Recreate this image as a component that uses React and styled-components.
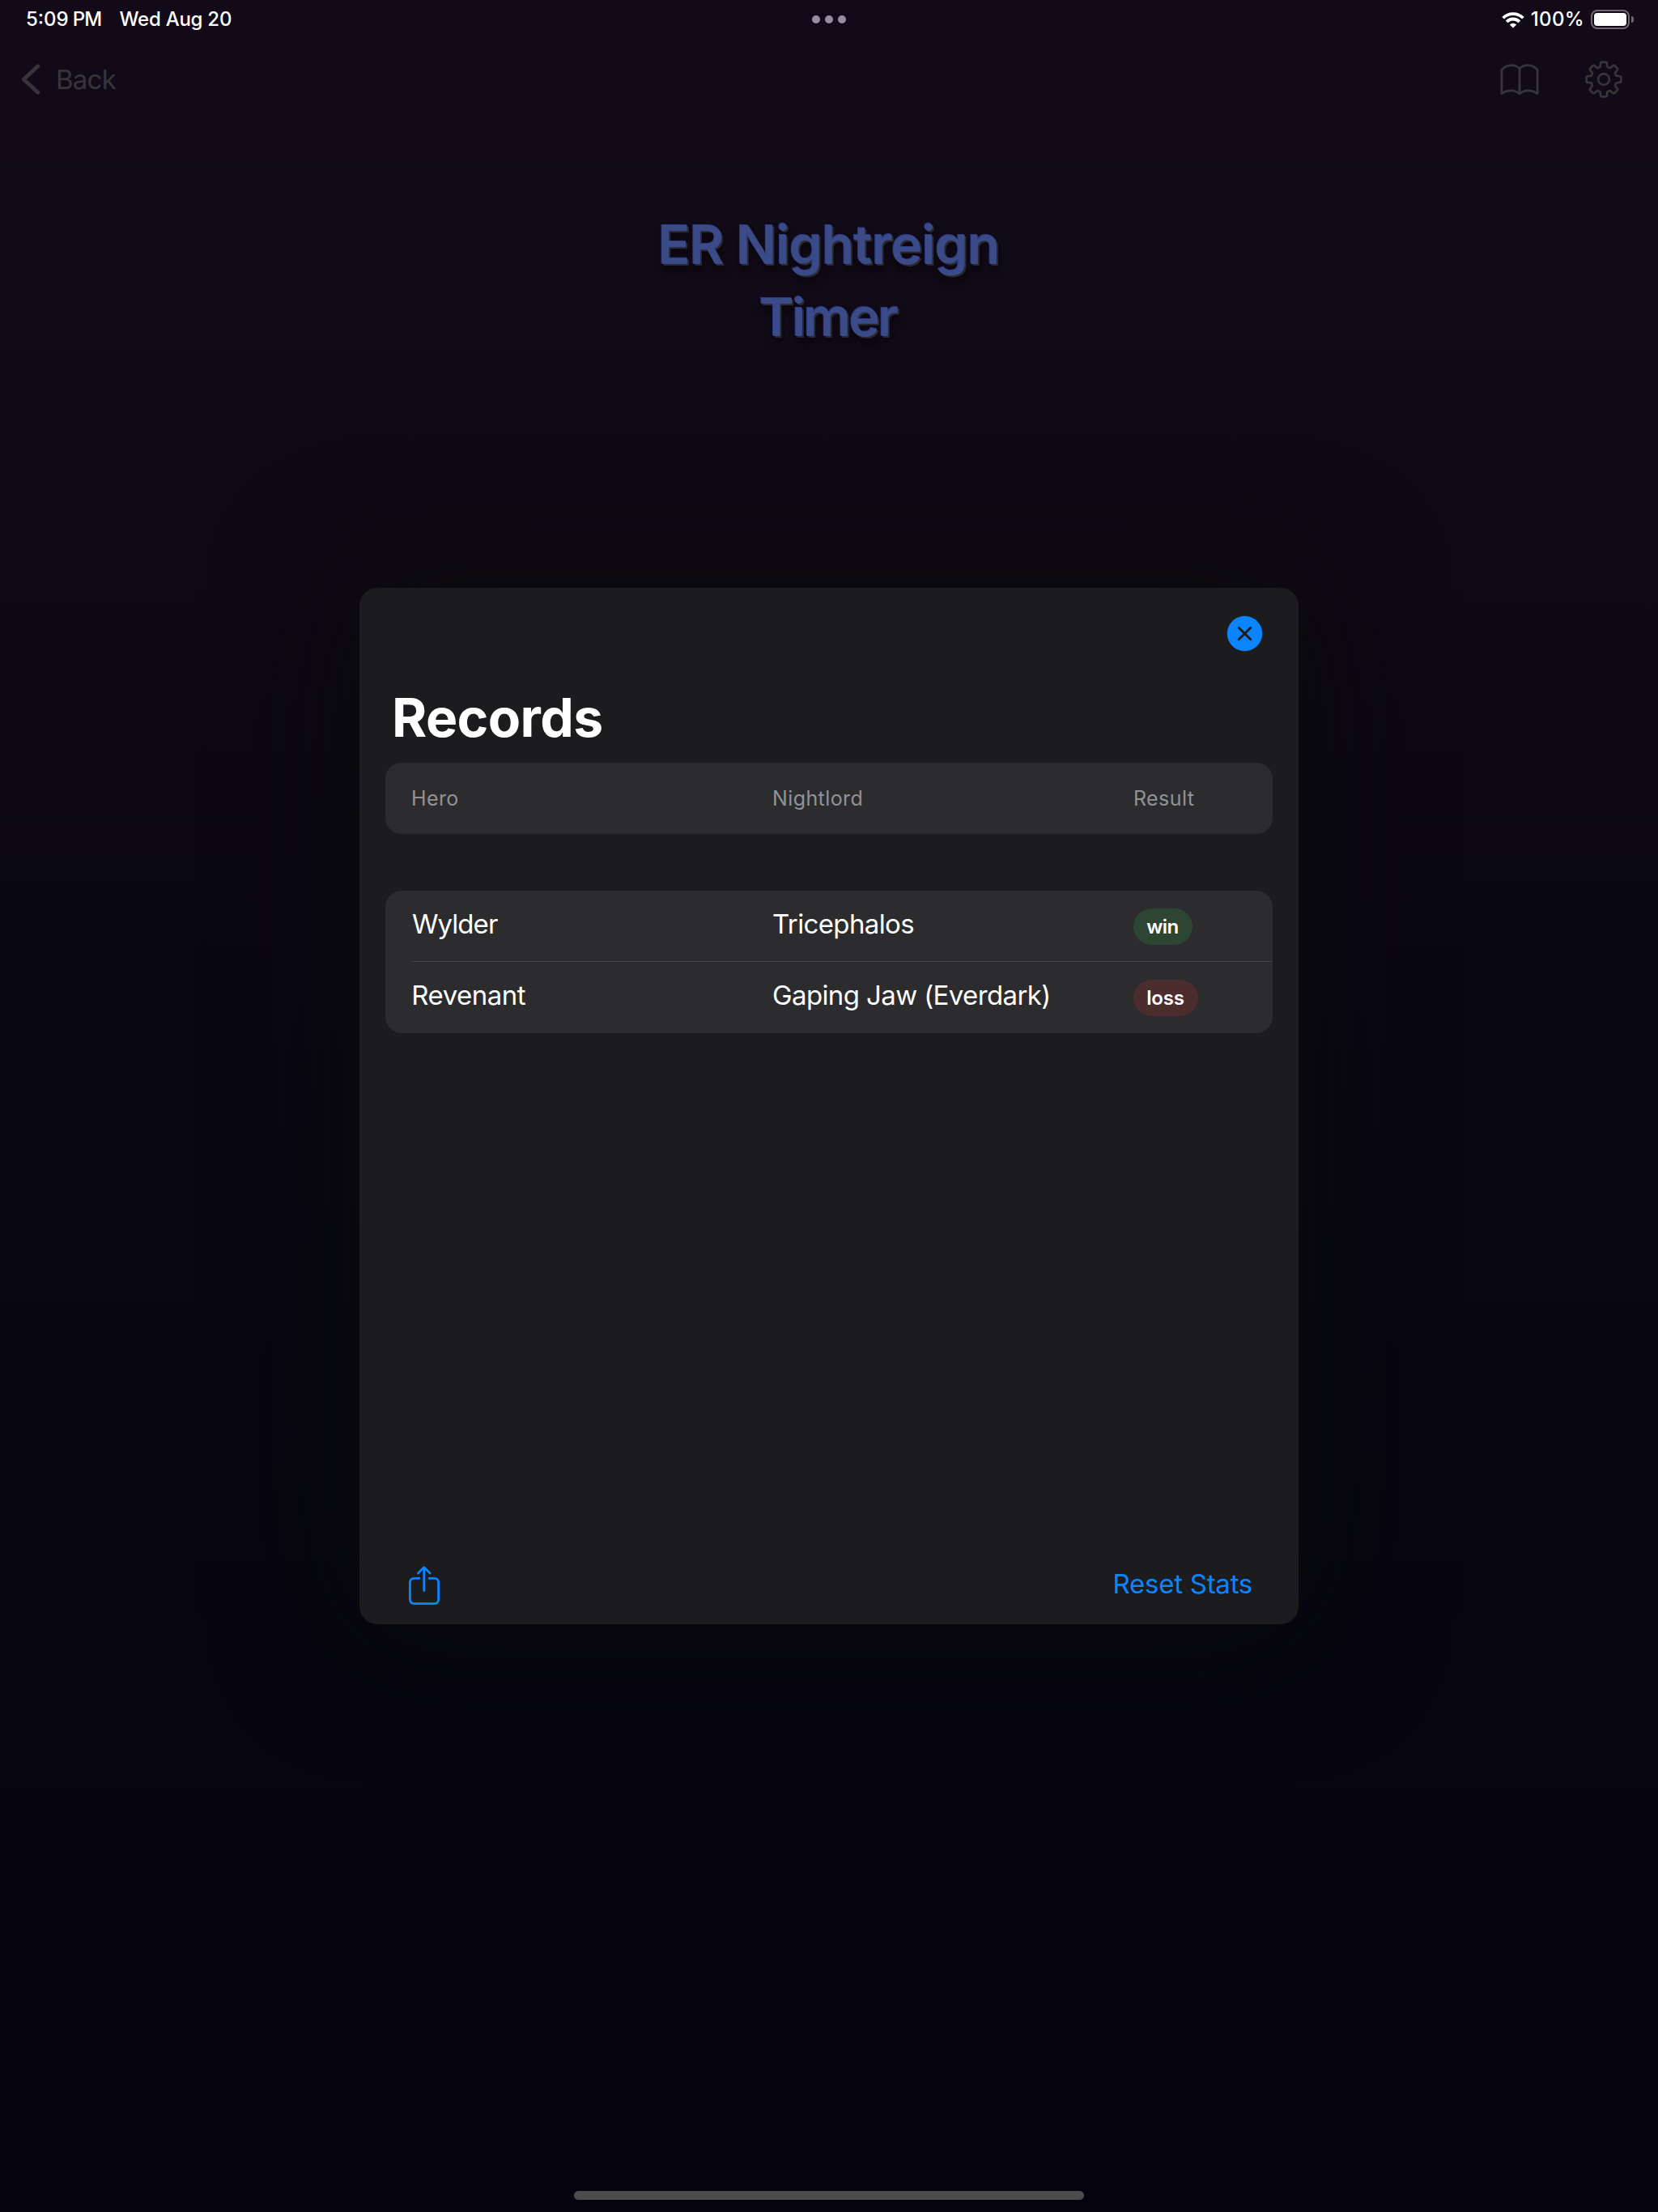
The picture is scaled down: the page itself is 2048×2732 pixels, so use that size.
import React from "react";
import styled, { createGlobalStyle } from "styled-components";

const GlobalStyle = createGlobalStyle`
  *, *::before, *::after { box-sizing: border-box; }
  html, body { margin: 0; padding: 0; background: #04030f; }
  body { font-family: Inter, "Liberation Sans", sans-serif; }
  button {
    display: flex;
    align-items: center;
    margin: 0;
    padding: 0;
    border: 0;
    background: none;
    color: inherit;
    font: inherit;
  }
  svg { display: block; flex: none; }
`;

const Screen = styled.div`
  position: relative;
  display: flex;
  flex-direction: column;
  width: 2048px;
  height: 2732px;
  overflow: hidden;
  background: linear-gradient(
    180deg,
    #130a19 0%,
    #110a17 12%,
    #0f0915 25%,
    #0c0815 36%,
    #090713 50%,
    #070611 70%,
    #04030f 100%
  );
`;

const StatusBar = styled.header`
  display: grid;
  grid-template-columns: 1fr auto 1fr;
  align-items: center;
  height: 48px;
  padding: 0 30px 0 32px;
  color: #fff;
  font-size: 24px;
  font-weight: 500;
  line-height: 47px;
`;

const StatusGroup = styled.div`
  display: flex;
  align-items: center;
  justify-content: ${(p) => (p.$end ? "flex-end" : "flex-start")};
`;

const StatusText = styled.span`
  padding-bottom: 1px;
  line-height: 46px;
  letter-spacing: ${(p) => p.$track || 0}px;
  margin-left: ${(p) => p.$before || 0}px;
  white-space: nowrap;
`;

const Dots = styled.div`
  display: flex;
  gap: 6px;
  margin-right: 2px;
`;

const Dot = styled.i`
  width: 10px;
  height: 10px;
  border-radius: 50%;
  background: #978d9f;
`;

const Battery = styled.div`
  display: flex;
  align-items: center;
  gap: 2px;
  margin-left: 8px;
`;

const BatteryShell = styled.div`
  width: 48px;
  height: 24px;
  padding: 2px;
  border: 2px solid #6e6876;
  border-radius: 8px;
`;

const BatteryLevel = styled.div`
  height: 100%;
  border-radius: 4px;
  background: #fff;
`;

const BatteryCap = styled.div`
  width: 3px;
  height: 8px;
  border-radius: 0 4px 4px 0;
  background: #6e6876;
`;

const NavBar = styled.nav`
  display: flex;
  align-items: center;
  justify-content: space-between;
  height: 100px;
  padding: 0 44px 0 26px;
  color: #37353a;
`;

const BackButton = styled.button`
  && { gap: 19px; }
`;

const BackLabel = styled.span`
  font-size: 33px;
  line-height: 40px;
  letter-spacing: -0.75px;
`;

const NavActions = styled.div`
  display: flex;
  align-items: center;
  gap: 57px;
`;

const AppTitle = styled.h1`
  display: flex;
  flex-direction: column;
  align-items: center;
  margin: 109px 0 0;
  color: #3b4b88;
  font-size: 66px;
  font-weight: 570;
  line-height: 90px;
  text-shadow:
    -1px -1px 0 #27388a,
    2px 2px 0 #2a2930,
    2px 8px 8px rgba(0, 0, 0, 0.5);
`;

const TitleLine = styled.span`
  font-size: ${(p) => p.$size}px;
  letter-spacing: ${(p) => p.$track}px;
  margin-right: ${(p) => -p.$track}px;
`;

const Overlay = styled.div`
  position: absolute;
  inset: 0;
  display: flex;
  align-items: center;
  justify-content: center;
`;

const Sheet = styled.section`
  display: flex;
  flex-direction: column;
  width: 1160px;
  height: 1280px;
  padding: 0 32px;
  border-radius: 22px;
  background: #1c1c1e;
  color: #fff;
  box-shadow: 0 0 170px rgba(9, 12, 8, 0.85);
`;

const SheetTop = styled.div`
  display: flex;
  align-items: flex-start;
  justify-content: flex-end;
  padding: 34px 12px 0 0;
  height: 116px;
`;

const SheetTitle = styled.h2`
  margin: 0;
  height: 100px;
  padding-left: 8px;
  font-size: 66px;
  font-weight: 700;
  line-height: 89px;
  letter-spacing: -0.65px;
`;

const Card = styled.div`
  border-radius: 20px;
  background: #2c2c2e;
  overflow: hidden;
  margin-bottom: ${(p) => p.$after || 0}px;
`;

const Columns = styled.div`
  display: grid;
  grid-template-columns: 446px 446px 1fr;
  height: 88px;
  margin-left: 32px;
`;

const HeaderRow = styled(Columns)`
  align-items: center;
  color: #929296;
  font-size: 25px;
  line-height: 30px;
  letter-spacing: 0.4px;
`;

const RecordRow = styled(Columns)`
  align-items: baseline;
  padding-top: 21px;
  font-size: 33px;
  line-height: 40px;
  letter-spacing: -0.62px;
  box-shadow: ${(p) => (p.$divided ? "inset 0 -1px 0 #464649" : "none")};
`;

const HeroName = styled.span`
  padding-left: ${(p) => p.$inset}px;
  letter-spacing: ${(p) => p.$track}px;
`;

const Badge = styled.span`
  justify-self: start;
  height: 45px;
  padding: 0 ${(p) => (p.$kind === "win" ? "17.2px 0 16.2px" : "16.8px 0 16.2px")};
  padding: ${(p) => (p.$kind === "win" ? "0 17.4px 0 16.2px" : "0 17.2px 0 16.2px")};
  border-radius: 22.5px;
  background: ${(p) => (p.$kind === "win" ? "#2d4533" : "#4c2d2e")};
  font-size: 24px;
  font-weight: 600;
  line-height: 45px;
  letter-spacing: ${(p) => (p.$kind === "win" ? "-0.5px" : "-0.2px")};
`;

const Toolbar = styled.footer`
  display: flex;
  align-items: center;
  justify-content: space-between;
  height: 100px;
  margin-top: auto;
  padding: 0 25px 0 29px;
  color: #0a84ff;
`;

const ShareButton = styled.button`
  && { padding-top: 4px; }
`;

const ResetLabel = styled.span`
  font-size: 33px;
  line-height: 40px;
  letter-spacing: -0.26px;
`;

const HomeIndicator = styled.div`
  align-self: center;
  width: 630px;
  height: 11px;
  margin: auto 0 15px;
  border-radius: 5.5px;
  background: #4c4c4c;
`;

const WifiIcon = () => (
  <svg width="28" height="21" viewBox="0 0 28 21" fill="none" stroke="#fff" strokeWidth="3.8">
    <path d="M1.6 8.3A17.3 17.3 0 0 1 26.4 8.3" />
    <path d="M6.1 12.8A11.1 11.1 0 0 1 21.9 12.8" />
    <path d="M9.8 16.4A6 6 0 0 1 18.2 16.4L14 20.6Z" fill="#fff" stroke="none" />
  </svg>
);

const ChevronIcon = () => (
  <svg width="24" height="38" viewBox="0 0 24 38" fill="none" stroke="currentColor" strokeWidth="4.8" strokeLinecap="round" strokeLinejoin="round">
    <path d="M20.8 2.8L3.3 19L20.8 35.2" />
  </svg>
);

const BookIcon = () => (
  <svg width="48" height="40" viewBox="0 0 48 40" fill="none" stroke="currentColor" strokeWidth="2.8" strokeLinejoin="round">
    <path d="M1.9 37.6V8.4C8 1.2 18.8 .8 24 6.8C29.2 .8 40 1.2 46.1 8.4V37.6C38.6 32.6 29.8 32.8 24 38C18.2 32.8 9.4 32.6 1.9 37.6Z" />
    <path d="M24 6.8V38" />
  </svg>
);

const gearPoint = (radius, degrees) => {
  const a = ((degrees - 90) * Math.PI) / 180;
  return `${(23 + radius * Math.cos(a)).toFixed(2)} ${(23 + radius * Math.sin(a)).toFixed(2)}`;
};

const gearPath =
  Array.from({ length: 8 }, (_, i) => {
    const c = i * 45;
    return (
      `${i ? "L" : "M"}${gearPoint(16.2, c - 15.5)}` +
      `L${gearPoint(20, c - 11)}Q${gearPoint(21.7, c - 10)} ${gearPoint(21.5, c - 6)}` +
      `L${gearPoint(21.5, c + 6)}Q${gearPoint(21.7, c + 10)} ${gearPoint(20, c + 11)}` +
      `L${gearPoint(16.2, c + 15.5)}Q${gearPoint(15.2, c + 22.5)} ${gearPoint(16.2, c + 29.5)}`
    );
  }).join("") + "Z";

const GearIcon = () => (
  <svg width="46" height="46" viewBox="0 0 46 46" fill="none" stroke="currentColor" strokeWidth="2.7" strokeLinejoin="round">
    <path d={gearPath} />
    <circle cx="23" cy="23" r="6.9" />
  </svg>
);

const CloseIcon = () => (
  <svg width="45" height="45" viewBox="0 0 45 45">
    <circle cx="22.5" cy="22.5" r="21.7" fill="#0a84ff" />
    <path d="M15.2 15.2L29.8 29.8M29.8 15.2L15.2 29.8" stroke="#1c1c1e" strokeWidth="2.9" strokeLinecap="round" />
  </svg>
);

const ShareIcon = () => (
  <svg width="38" height="48" viewBox="0 0 38 48" fill="none" stroke="currentColor" strokeWidth="2.8" strokeLinecap="round" strokeLinejoin="round">
    <path d="M14 15.4H6.4A5 5 0 0 0 1.4 20.4V41.6A5 5 0 0 0 6.4 46.6H31.6A5 5 0 0 0 36.6 41.6V20.4A5 5 0 0 0 31.6 15.4H24" strokeLinecap="butt" />
    <path d="M18.8 30.5V2M11.5 9L18.8 1.8L26.1 9" />
  </svg>
);

const records = [
  { hero: "Wylder", inset: 1, track: -0.95, lord: "Tricephalos", result: "win" },
  { hero: "Revenant", inset: 0.3, track: -0.5, lord: "Gaping Jaw (Everdark)", result: "loss" },
];

export default function App() {
  return (
    <>
      <GlobalStyle />
      <Screen>
        <StatusBar>
          <StatusGroup>
            <StatusText>5:09</StatusText>
            <StatusText $before={5} $track={-0.8}>PM</StatusText>
            <StatusText $before={22} $track={-0.25}>Wed Aug 20</StatusText>
          </StatusGroup>
          <Dots>
            <Dot />
            <Dot />
            <Dot />
          </Dots>
          <StatusGroup $end>
            <WifiIcon />
            <StatusText $before={8} $track={0.35}>100%</StatusText>
            <Battery>
              <BatteryShell>
                <BatteryLevel />
              </BatteryShell>
              <BatteryCap />
            </Battery>
          </StatusGroup>
        </StatusBar>

        <NavBar>
          <BackButton>
            <ChevronIcon />
            <BackLabel>Back</BackLabel>
          </BackButton>
          <NavActions>
            <BookIcon />
            <GearIcon />
          </NavActions>
        </NavBar>

        <AppTitle>
          <TitleLine $size={66} $track={-1}>ER Nightreign</TitleLine>
          <TitleLine $size={65} $track={-2.6}>Timer</TitleLine>
        </AppTitle>

        <HomeIndicator />

        <Overlay>
          <Sheet>
            <SheetTop>
              <button aria-label="Close">
                <CloseIcon />
              </button>
            </SheetTop>
            <SheetTitle>Records</SheetTitle>
            <Card $after={70}>
              <HeaderRow>
                <span>Hero</span>
                <span>Nightlord</span>
                <span>Result</span>
              </HeaderRow>
            </Card>
            <Card>
              {records.map((r, i) => (
                <RecordRow key={r.hero} $divided={i < records.length - 1}>
                  <HeroName $inset={r.inset} $track={r.track}>{r.hero}</HeroName>
                  <span>{r.lord}</span>
                  <Badge $kind={r.result}>{r.result}</Badge>
                </RecordRow>
              ))}
            </Card>
            <Toolbar>
              <ShareButton aria-label="Share">
                <ShareIcon />
              </ShareButton>
              <button>
                <ResetLabel>Reset Stats</ResetLabel>
              </button>
            </Toolbar>
          </Sheet>
        </Overlay>
      </Screen>
    </>
  );
}
